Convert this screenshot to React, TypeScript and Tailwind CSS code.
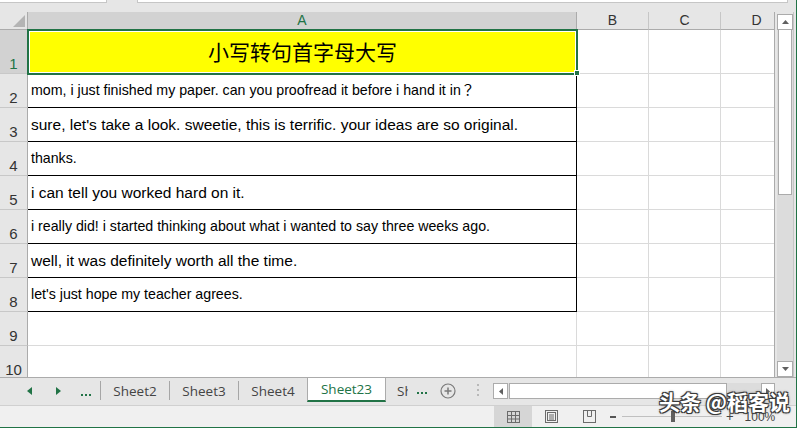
import React from "react";

type Line = { n: number; text: string; big: boolean };

const lines: Line[] = [
  { n: 2, text: "mom, i just finished my paper. can you proofread it before i hand it in？", big: false },
  { n: 3, text: "sure, let's take a look. sweetie, this is terrific. your ideas are so original.", big: true },
  { n: 4, text: "thanks.", big: false },
  { n: 5, text: "i can tell you worked hard on it.", big: true },
  { n: 6, text: "i really did! i started thinking about what i wanted to say three weeks ago.", big: false },
  { n: 7, text: "well, it was definitely worth all the time.", big: true },
  { n: 8, text: "let's just hope my teacher agrees.", big: false },
];

function Blank() {
  return <div className="w-[72px] shrink-0 border-r border-b border-[#dadada]" />;
}

function RowHead({ n }: { n: number }) {
  return (
    <div className="w-[28px] shrink-0 bg-[#e6e6e6] border-r border-b border-r-[#ababab] border-b-[#c8c8c8] flex items-end justify-center pb-[2px] text-[15px] leading-none text-[#333]">
      {n}
    </div>
  );
}

function HeaderRow() {
  return (
    <div className="flex h-[18px] shrink-0">
      <div className="w-[28px] shrink-0 bg-[#e6e6e6] border-r border-b border-[#ababab] flex items-end justify-end pr-[2px] pb-[2px]">
        <svg width="12" height="12" viewBox="0 0 12 12">
          <polygon points="12,0 12,12 0,12" fill="#b4b4b4" />
        </svg>
      </div>
      <div className="w-[549px] shrink-0 bg-[#d2d2d2] border-r border-b border-[#ababab] flex items-center justify-center text-[14px] text-[#217346]">
        A
      </div>
      {["B", "C", "D"].map((l) => (
        <div
          key={l}
          className="w-[72px] shrink-0 bg-[#e6e6e6] border-r border-b border-r-[#c6c6c6] border-b-[#ababab] flex items-center justify-center text-[14px] text-[#333]"
        >
          {l}
        </div>
      ))}
    </div>
  );
}

function Grid() {
  return (
    <div className="w-[775px] h-[365px] shrink-0 overflow-hidden border-r border-[#ababab] bg-white flex flex-col">
      <HeaderRow />

      {/* row 1: title, selected */}
      <div className="flex h-[44px] shrink-0">
        <div className="w-[28px] shrink-0 bg-[#d2d2d2] border-r border-b border-r-[#ababab] border-b-[#c8c8c8] flex items-end justify-center pb-[2px] text-[15px] leading-none text-[#217346]">
          1
        </div>
        <div className="w-[549px] shrink-0 relative bg-[#ffff00] flex items-center justify-center font-['Noto_Sans_CJK_SC',sans-serif] text-[21px] text-black">
          小写转句首字母大写
          <div className="absolute -inset-px border-2 border-[#217346] shadow-[inset_0_0_0_1px_#fff]" />
          <div className="absolute -right-[3px] -bottom-[2px] w-[6px] h-[6px] bg-[#217346] border border-white" />
        </div>
        <Blank />
        <Blank />
        <Blank />
      </div>

      {lines.map((line) => (
        <div key={line.n} className="flex h-[34px] shrink-0">
          <RowHead n={line.n} />
          <div
            className={
              "w-[549px] shrink-0 border-r border-b border-black flex items-center pl-[3px] pt-[1px] whitespace-nowrap text-black font-['Liberation_Sans','Noto_Sans_CJK_JP',sans-serif] " +
              (line.big ? "text-[15.5px]" : "text-[14.2px]")
            }
          >
            {line.text}
          </div>
          <Blank />
          <Blank />
          <Blank />
        </div>
      ))}

      {[9, 10].map((n) => (
        <div key={n} className="flex h-[34px] shrink-0">
          <RowHead n={n} />
          <div className="w-[549px] shrink-0 border-r border-b border-[#dadada]" />
          <Blank />
          <Blank />
          <Blank />
        </div>
      ))}
    </div>
  );
}

function VScroll() {
  return (
    <div className="ml-[2px] mt-[2px] w-[16px] h-[363px] bg-[#dcdcdc] flex flex-col">
      <div className="h-[16px] bg-white border border-[#ababab] flex items-center justify-center">
        <svg width="7" height="4" viewBox="0 0 7 4">
          <polygon points="0,4 7,4 3.5,0" fill="#606060" />
        </svg>
      </div>
      <div className="mx-[1px] h-[165px] bg-white border border-t-0 border-[#ababab]" />
      <div className="flex-1" />
      <div className="h-[16px] bg-white border border-[#ababab] flex items-center justify-center">
        <svg width="7" height="4" viewBox="0 0 7 4">
          <polygon points="0,0 7,0 3.5,4" fill="#606060" />
        </svg>
      </div>
    </div>
  );
}

function Dots() {
  return (
    <div className="flex gap-[2px]">
      <div className="w-[2px] h-[2px] bg-[#217346]" />
      <div className="w-[2px] h-[2px] bg-[#217346]" />
      <div className="w-[2px] h-[2px] bg-[#217346]" />
    </div>
  );
}

function Sep() {
  return <div className="w-px h-[19px] mt-[3px] shrink-0 bg-[#a6a6a6]" />;
}

function TabBar() {
  return (
    <div className="h-[28px] shrink-0 border-t border-[#ababab] bg-[#e6e6e6] flex items-start text-[13.5px] text-[#444] font-['Open_Sans','Liberation_Sans',sans-serif]">
      <div className="w-[100px] h-[26px] shrink-0 flex items-center">
        <svg className="ml-[27px]" width="5" height="8" viewBox="0 0 5 8">
          <polygon points="5,0 5,8 0,4" fill="#217346" />
        </svg>
        <svg className="ml-[24px]" width="5" height="8" viewBox="0 0 5 8">
          <polygon points="0,0 0,8 5,4" fill="#217346" />
        </svg>
        <div className="ml-[20px] mt-[7px]">
          <Dots />
        </div>
      </div>
      <Sep />
      <div className="w-[68px] h-[26px] shrink-0 flex items-center justify-center">Sheet2</div>
      <Sep />
      <div className="w-[68px] h-[26px] shrink-0 flex items-center justify-center">Sheet3</div>
      <Sep />
      <div className="w-[68px] h-[26px] shrink-0 flex items-center justify-center">Sheet4</div>
      <div className="w-[79px] h-[24px] shrink-0 bg-white border-x border-[#ababab] border-b-2 border-b-[#217346] flex items-center justify-center text-[#217346]">
        Sheet23
      </div>
      <div className="w-[22px] h-[26px] shrink-0 overflow-hidden pl-[11px] flex items-center whitespace-nowrap">
        Sheet5
      </div>
      <div className="ml-[9px] mt-[14px] shrink-0">
        <Dots />
      </div>
      <svg className="ml-[13px] mt-[5px] shrink-0" width="16" height="16" viewBox="0 0 16 16" fill="none" stroke="#7a7a7a">
        <circle cx="8" cy="8" r="7" strokeWidth="1.2" />
        <path d="M8 4.5v7M4.5 8h7" strokeWidth="1.5" />
      </svg>
      <div className="ml-[21px] mt-[6px] shrink-0 flex flex-col gap-[3px]">
        <div className="w-[2px] h-[2px] bg-[#b8b8b8]" />
        <div className="w-[2px] h-[2px] bg-[#b8b8b8]" />
        <div className="w-[2px] h-[2px] bg-[#b8b8b8]" />
      </div>
      <div className="ml-[14px] mt-[5px] w-[282px] h-[16px] shrink-0 flex bg-[#dcdcdc]">
        <div className="w-[15px] bg-white border border-[#ababab] flex items-center justify-center">
          <svg width="4" height="7" viewBox="0 0 4 7">
            <polygon points="4,0 4,7 0,3.5" fill="#606060" />
          </svg>
        </div>
        <div className="ml-[1px] w-[218px] bg-white border border-[#ababab]" />
        <div className="flex-1" />
        <div className="w-[14px] bg-white border border-[#ababab] flex items-center justify-center">
          <svg width="4" height="7" viewBox="0 0 4 7">
            <polygon points="0,0 0,7 4,3.5" fill="#606060" />
          </svg>
        </div>
      </div>
    </div>
  );
}

function StatusBar() {
  return (
    <div className="h-[23px] shrink-0 border-t border-b border-t-[#d0d0d0] border-b-[#217346] bg-[#f0f0f0] flex items-stretch text-[#444]">
      <div className="ml-[494px] w-[38px] bg-[#d6d6d6] flex items-center justify-center">
        <svg width="13" height="12" viewBox="0 0 13 12" fill="none" stroke="#6b6b6b">
          <rect x="0.5" y="0.5" width="12" height="11" />
          <path d="M4.5 0.5v11M8.5 0.5v11M0.5 4.5h12M0.5 8h12" />
        </svg>
      </div>
      <div className="w-[38px] flex items-center justify-center">
        <svg width="13" height="13" viewBox="0 0 13 13" fill="none" stroke="#6b6b6b">
          <rect x="0.5" y="0.5" width="12" height="12" />
          <rect x="2.5" y="2.5" width="8" height="8" />
          <path d="M4 5h5M4 7h5M4 9h5" />
        </svg>
      </div>
      <div className="w-[38px] flex items-center justify-center">
        <svg width="13" height="13" viewBox="0 0 13 13" fill="none" stroke="#6b6b6b">
          <rect x="0.5" y="0.5" width="12" height="12" />
          <path d="M4.5 0.5V6.5H8.5V0.5" />
        </svg>
      </div>
      <div className="ml-[2px] w-[6px] h-[2px] self-center bg-[#555]" />
      <div className="ml-[6px] w-[100px] relative self-center h-[11px] flex items-center">
        <div className="w-full h-px bg-[#c0c0c0]" />
        <div className="absolute left-[49px] top-0 w-[4px] h-[11px] bg-[#5f5f5f]" />
      </div>
      <div className="ml-[4px] self-center text-[13px] leading-none font-['Liberation_Sans',sans-serif]">+</div>
      <div className="ml-[11px] self-center text-[12px] leading-none font-['Liberation_Sans',sans-serif]">100%</div>
    </div>
  );
}

export default function App() {
  return (
    <div className="w-[799px] h-[428px] flex overflow-hidden bg-white font-['Liberation_Sans',sans-serif]">
      <div className="w-[796px] h-full shrink-0 flex flex-col bg-[#e6e6e6] relative">
        <div className="h-[12px] shrink-0 flex">
          <div className="w-[107px] h-[3px] bg-white border-r border-b border-[#c6c6c6]" />
          <div className="ml-[30px] w-[651px] h-[3px] bg-white border-x border-b border-[#c6c6c6]" />
        </div>
        <div className="h-[365px] shrink-0 flex">
          <Grid />
          <VScroll />
          <div className="w-px h-full bg-[#c6c6c6]" />
        </div>
        <TabBar />
        <StatusBar />
        <div className="absolute left-[659px] top-[391px] whitespace-nowrap leading-none text-[21px] font-bold text-white font-['Noto_Sans_CJK_SC',sans-serif] [text-shadow:-1px_-1px_0_#3a3a3a,1px_-1px_0_#3a3a3a,-1px_1px_0_#3a3a3a,1px_1px_0_#3a3a3a,0_0_3px_#000]">
          头条 @稻客说
        </div>
      </div>
      <div className="w-px h-full bg-[#217346]" />
    </div>
  );
}
